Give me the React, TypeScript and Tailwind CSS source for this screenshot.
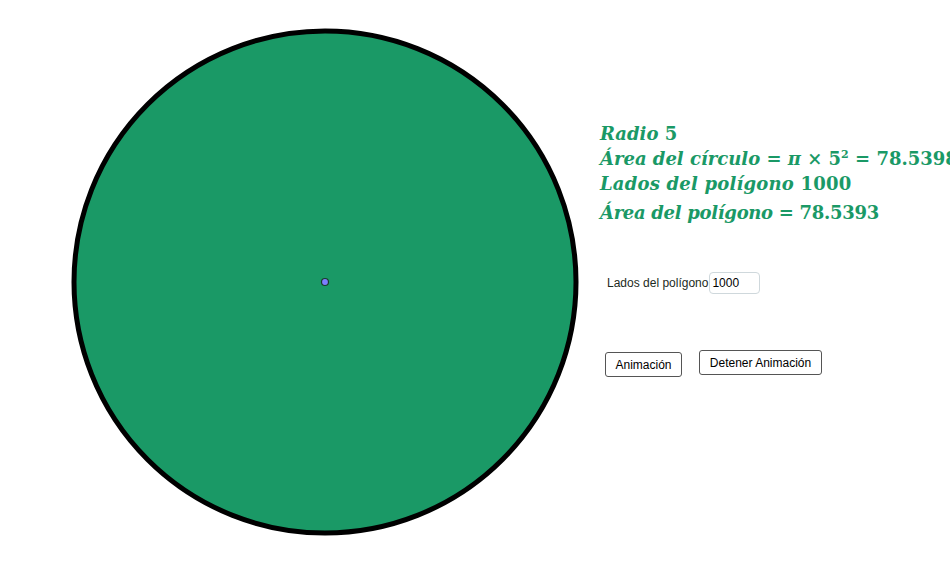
import React from 'react';

const green = 'text-[#1a9966]';

function MathLine({ children, className = '' }: { children: React.ReactNode; className?: string }) {
  return (
    <div
      className={`whitespace-nowrap font-bold text-[18px] leading-[25px] ${green} ${className}`}
      style={{ fontFamily: '"DejaVu Serif", "Liberation Serif", serif' }}
    >
      {children}
    </div>
  );
}

export default function App() {
  return (
    <div className="w-[950px] h-[580px] bg-white flex overflow-hidden">
      {/* Circle / polygon drawing */}
      <svg width="595" height="580" className="shrink-0">
        <circle cx="325" cy="282" r="251" fill="#1a9966" stroke="#000" strokeWidth="5" />
        <circle cx="325" cy="282" r="3.5" fill="#7d7dff" stroke="#1a3a2a" strokeWidth="1.2" />
      </svg>

      {/* Right panel */}
      <div className="flex flex-col pt-[121px] pl-[5px] min-w-0">
        <div>
          <MathLine>
            <i>Radio</i> 5
          </MathLine>
          <MathLine>
            <i>Área del círculo</i> = <i>π</i> × 5<sup className="text-[11px] -top-[7px]">2</sup> = 78.5398
          </MathLine>
          <MathLine className="tracking-[0.2px]">
            <i>Lados del polígono</i> 1000
          </MathLine>
          <MathLine className="mt-[4px] tracking-[-0.3px]">
            <i>Área del polígono</i> = 78.5393
          </MathLine>
        </div>

        <div
          className="flex items-center mt-[47px] pl-[7px] text-[12px] text-[#1c2a22]"
          style={{ fontFamily: '"Liberation Sans", Arial, sans-serif' }}
        >
          <span>Lados del polígono</span>
          <input
            defaultValue="1000"
            className="ml-[1px] w-[51px] h-[22px] px-[2px] text-[12px] text-black border border-[#cfd8dc] rounded-[4px] outline-none"
          />
        </div>

        <div
          className="flex items-start mt-[56px] pl-[5px] gap-[17px] text-[12px] text-black"
          style={{ fontFamily: '"Liberation Sans", Arial, sans-serif' }}
        >
          <button className="mt-[2px] w-[77px] h-[25px] border border-[#555] rounded-[3px] bg-white">
            Animación
          </button>
          <button className="w-[123px] h-[25px] border border-[#555] rounded-[3px] bg-white">
            Detener Animación
          </button>
        </div>
      </div>
    </div>
  );
}
